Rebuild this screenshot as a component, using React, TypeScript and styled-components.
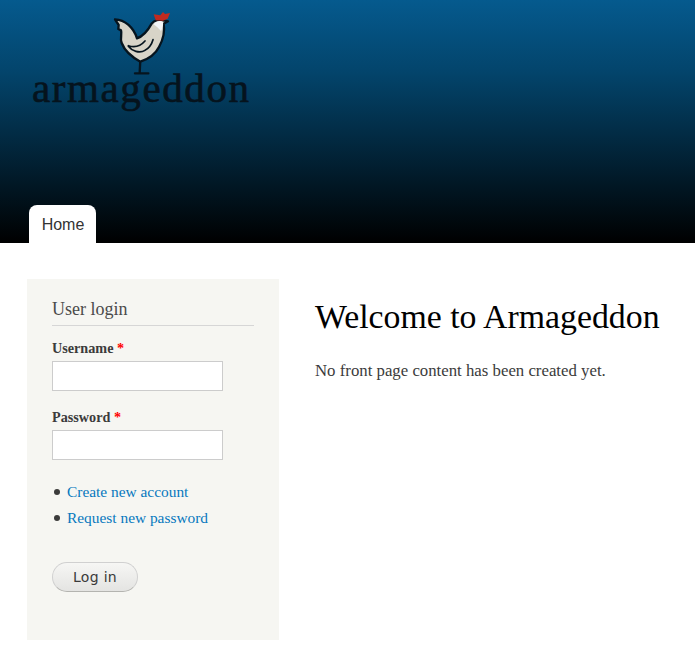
import { createGlobalStyle, styled } from "styled-components";

const GlobalStyle = createGlobalStyle`
  html, body {
    margin: 0;
    padding: 0;
    background: #fff;
  }
  body {
    font-family: "Liberation Serif", serif;
    font-size: 16px;
    color: #3b3b3b;
  }
`;

const Header = styled.header`
  height: 243px;
  background: linear-gradient(#055a8e 0%, #03446b 30%, #000 100%);
  display: flex;
  flex-direction: column;
  justify-content: space-between;
  padding-left: 29px;
  box-sizing: border-box;
`;

const Logo = styled.div`
  display: flex;
  flex-direction: column;
  align-items: flex-start;
`;

const Rooster = styled.svg`
  display: block;
  margin: 5px 0 0 72px;
  width: 80px;
  height: 75px;
`;

const LogoText = styled.div`
  margin: -14px 0 0 3px;
  font-family: "Liberation Serif", serif;
  font-size: 41px;
  line-height: 44px;
  letter-spacing: 1.6px;
  color: #05131d;
  -webkit-text-stroke: 0.6px #05131d;
`;

const Tab = styled.a`
  align-self: flex-start;
  height: 38px;
  width: 67px;
  padding: 1px 0 0 1px;
  background: #fff;
  border-radius: 8px 8px 0 0;
  display: flex;
  align-items: center;
  justify-content: center;
  box-sizing: border-box;
  font-family: "Liberation Sans", sans-serif;
  font-size: 16px;
  color: #333;
`;

const Layout = styled.div`
  display: flex;
  align-items: flex-start;
  padding: 36px 0 12px 27px;
`;

const Sidebar = styled.aside`
  width: 252px;
  height: 361px;
  box-sizing: border-box;
  background: #f6f6f2;
  padding: 20px 25px 0;
  flex-shrink: 0;
`;

const BlockTitle = styled.h2`
  margin: 0 0 14px;
  padding-bottom: 5px;
  border-bottom: 1px solid #d6d6d6;
  font-size: 18px;
  line-height: 21px;
  font-weight: 400;
  color: #4a4a4a;
`;

const Field = styled.div`
  margin-bottom: 18px;
`;

const Label = styled.label`
  display: block;
  font-size: 14.2px;
  line-height: 17px;
  font-weight: 700;
  margin-bottom: 4px;
  color: #3b3b3b;
`;

const Required = styled.span`
  color: #f00;
`;

const Input = styled.input`
  display: block;
  width: 171px;
  height: 30px;
  box-sizing: border-box;
  border: 1px solid #ccc;
  background: #fff;
  padding: 0;
`;

const Links = styled.ul`
  margin: 0;
  padding: 0;
  list-style: none;
  margin-top: 19px;
`;

const LinkItem = styled.li`
  display: flex;
  align-items: center;
  height: 26px;
  font-size: 15.4px;
  &::before {
    content: "";
    width: 6px;
    height: 6px;
    border-radius: 50%;
    background: #3b3b3b;
    margin: 0 7px 0 2px;
  }
`;

const Link = styled.a`
  color: #0678be;
`;

const LoginButton = styled.button`
  display: block;
  margin-top: 31px;
  width: 86px;
  height: 30px;
  padding: 0;
  border: 1px solid #d0d0d0;
  border-bottom-color: #b4b4b0;
  border-radius: 15px;
  background: linear-gradient(#f6f6f4, #e4e4e2);
  font-family: "DejaVu Sans", sans-serif;
  font-size: 14px;
  letter-spacing: 0.3px;
  color: #3a3a3a;
`;

const Main = styled.main`
  padding: 15px 0 0 36px;
  flex: 1;
`;

const Title = styled.h1`
  margin: 0 0 19px;
  font-size: 33.8px;
  line-height: 46px;
  font-weight: 400;
  color: #000;
  white-space: nowrap;
`;

const Body = styled.p`
  margin: 0;
  font-size: 16.8px;
  line-height: 24px;
  color: #3b3b3b;
  white-space: nowrap;
`;

function RoosterIcon() {
  return (
    <Rooster viewBox="0 0 240 225" aria-hidden="true">
      <path
        d="M118 165 L116 203 M102 205 L142 205"
        fill="none"
        stroke="#06141e"
        strokeWidth="7"
        strokeLinecap="round"
      />
      <path
        d="M42 43 C72 44 98 68 108 100 C128 94 142 74 152 56 C160 44 178 42 190 47 L201 49 L188 56 C192 78 186 104 174 126 C164 146 142 162 118 170 C96 158 72 140 62 114 C56 98 64 88 60 76 L52 72 L53 60 Z"
        fill="#d8d4c8"
        stroke="#06141e"
        strokeWidth="7"
        strokeLinejoin="round"
      />
      <path
        d="M158 58 C166 48 178 46 186 51 C187 60 186 68 180 78 C172 70 166 64 158 58 Z"
        fill="#f4f6f8"
      />
      <path
        d="M158 28 L178 31 L186 21 L192 27 L207 24 L200 41 L186 47 L164 46 Z"
        fill="#c02a20"
      />
      <path
        d="M82 122 C100 128 118 124 132 108 M82 124 C92 138 116 146 132 136 C146 128 152 118 156 104"
        fill="none"
        stroke="#06141e"
        strokeWidth="5"
        strokeLinecap="round"
      />
    </Rooster>
  );
}

function App() {
  return (
    <>
      <GlobalStyle />
      <Header>
        <Logo>
          <RoosterIcon />
          <LogoText>armageddon</LogoText>
        </Logo>
        <Tab>Home</Tab>
      </Header>
      <Layout>
        <Sidebar>
          <BlockTitle>User login</BlockTitle>
          <Field>
            <Label>
              Username <Required>*</Required>
            </Label>
            <Input type="text" />
          </Field>
          <Field>
            <Label>
              Password <Required>*</Required>
            </Label>
            <Input type="password" />
          </Field>
          <Links>
            <LinkItem>
              <Link>Create new account</Link>
            </LinkItem>
            <LinkItem>
              <Link>Request new password</Link>
            </LinkItem>
          </Links>
          <LoginButton>Log in</LoginButton>
        </Sidebar>
        <Main>
          <Title>Welcome to Armageddon</Title>
          <Body>No front page content has been created yet.</Body>
        </Main>
      </Layout>
    </>
  );
}

export default App;
